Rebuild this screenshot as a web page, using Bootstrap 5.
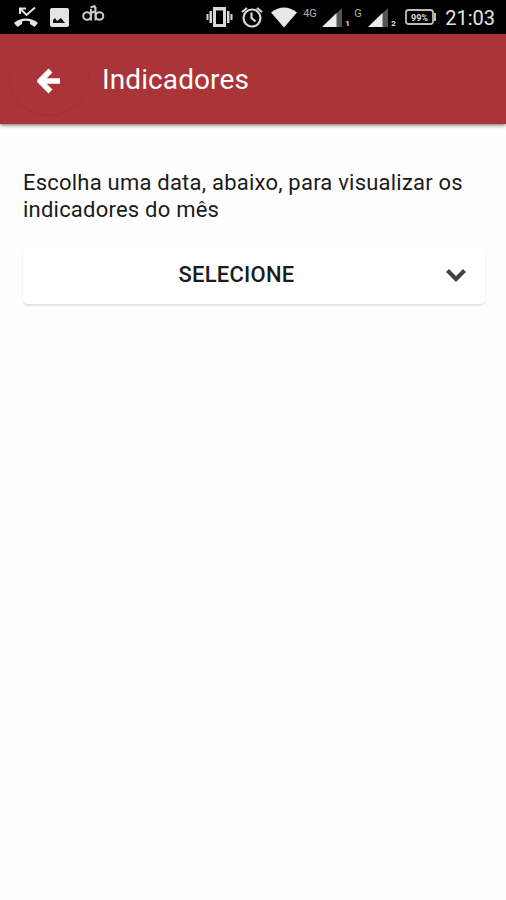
<!DOCTYPE html>
<html lang="pt-BR">
<head>
<meta charset="utf-8">
<meta name="viewport" content="width=device-width, initial-scale=1">
<title>Indicadores</title>
<link href="https://cdn.jsdelivr.net/npm/bootstrap@5.3.0/dist/css/bootstrap.min.css" rel="stylesheet">
<style>
body { font-family: Roboto, sans-serif; background: #fefefe; color: #1b1b1b; min-height: 900px; }
svg { display: block; flex: none; }
.status-bar { height: 34px; background: #000; color: #e4e4e4; padding-right: 11px; }
.net { font-size: 11px; line-height: 12px; color: #b0b0b0; width: 15px; margin: 8px 4px 0 6px; }
.net-g { width: 9px; margin: 8px 5px 0 4px; }
.sim { font-size: 8px; line-height: 8px; font-weight: 700; width: 5px; margin: 20px 0 0 2px; }
.clock { font-size: 20px; line-height: 34px; margin: 1px 0 0 8px; white-space: nowrap; }
.app-bar { height: 90px; background: #aa3438; color: #fff; box-shadow: 0 1px 4px rgba(0,0,0,.6); padding-left: 9px; }
.back { width: 80px; height: 80px; padding: 11px 2px 0 0; border: 0; border-radius: 50%; background: none; box-shadow: 0 1px 1px rgba(110,20,25,.16); margin-top: -8px; }
.page-title { font-size: 28px; font-weight: 400; line-height: 90px; margin: 2px 0 0 13px; letter-spacing: .1px; }
.page-main { padding: 46px 21px 0 23px; }
.intro { font-size: 22px; line-height: 26.5px; margin: 0 0 23px; white-space: nowrap; letter-spacing: .22px; }
.month-select { height: 58px; border: 0; border-radius: 5px; background: #fff; box-shadow: 0 2px 2px rgba(0,0,0,.11); color: #1c1c1c; font-size: 22px; font-weight: 500; letter-spacing: .25px; padding: 0 18px 0 5px; }
.month-select span { margin-top: -2px; }
</style>
</head>
<body>
<div class="status-bar d-flex align-items-start overflow-hidden">
  <svg width="39" height="34" viewBox="0 0 39 34" fill="none" stroke="#e4e4e4"><path d="M20 14V8.500h6M20.500 9l6 6L35 7.500" stroke-width="2"/><path d="M14 23C20 17 32 17 38 23L34.500 27L30 24V21.500C27 20.500 25 20.500 22 21.500V24L17.500 27Z" fill="#e4e4e4" stroke="none"/></svg>
  <svg width="43" height="34" viewBox="39 0 43 34"><rect x="50" y="8" width="19" height="19" rx="2" fill="#e4e4e4"/><path d="M53 23v-3l2-2 2 3 4-3 4 5z" fill="#111"/></svg>
  <svg width="24" height="34" viewBox="82 0 24 34" fill="none" stroke="#c9c9c9" stroke-width="2"><circle cx="87" cy="16" r="3.800"/><circle cx="99.500" cy="16" r="3.800"/><path d="M91 9v11.500M95.500 20.500V7M90.500 7.500l4-1.500 1 3M91 13l4.500-2"/></svg>
  <svg class="ms-auto" width="28" height="34" viewBox="206 0 28 34"><path d="M213 7h13v20h-13zM209.500 11h2.500v12h-2.500zM227 11h2.500v12H227zM206.500 14h2v6h-2zM230.500 14h2v6h-2z" fill="#d8d8d8"/><path d="M216 10.500h7v13.500h-7z" fill="#000"/></svg>
  <svg width="37" height="34" viewBox="234 0 37 34" fill="none" stroke="#d8d8d8" stroke-width="2.200"><circle cx="252" cy="18" r="8.500"/><path d="M251.500 12.500V18l4 3.500M242 12l5-4M257 8l5 4"/></svg>
  <svg width="26" height="34" viewBox="271 0 26 34"><path d="M271 12.500Q284 2.500 297 12.500L284 27.500Z" fill="#e8e8e8"/></svg>
  <span class="net">4G</span>
  <svg width="21" height="34" viewBox="0 0 21 34"><path d="M0 27L20 8V27Z" fill="#555"/><path d="M0 27L14.500 13V27Z" fill="#ececec"/></svg>
  <span class="sim">1</span>
  <span class="net net-g">G</span>
  <svg width="21" height="34" viewBox="0 0 21 34"><path d="M0 27L20 8V27Z" fill="#555"/><path d="M0 27L14.500 13V27Z" fill="#ececec"/></svg>
  <span class="sim">2</span>
  <svg width="41" height="34" viewBox="396 0 41 34" fill="none" stroke="#bcbcbc"><rect x="406" y="10" width="27" height="14" rx="2.500" stroke-width="1.800"/><path d="M435 13v8" stroke-width="2"/><text x="411" y="20.500" font-size="9" font-weight="700" fill="#ddd" stroke="none" textLength="17" lengthAdjust="spacingAndGlyphs">99%</text></svg>
  <time class="clock">21:03</time>
</div>
<header class="app-bar d-flex align-items-center">
  <button type="button" class="back d-flex align-items-center justify-content-center" aria-label="Voltar">
    <svg width="26" height="26" viewBox="0 0 26 26" fill="none" stroke="#fff" stroke-width="5.600" stroke-linejoin="round"><path d="M15.500 2.500L5 13l10.500 10.500M6 13h19"/></svg>
  </button>
  <h1 class="page-title">Indicadores</h1>
</header>
<main class="page-main">
  <p class="intro">Escolha uma data, abaixo, para visualizar os<br>indicadores do mês</p>
  <button type="button" class="month-select w-100 d-flex align-items-center">
    <span class="flex-grow-1 text-center">SELECIONE</span>
    <svg width="22" height="16" viewBox="0 0 22 16" fill="none" stroke="#404040" stroke-width="4.200"><path d="M2.500 3.500l8.500 8.500 8.500-8.500"/></svg>
  </button>
</main>
<script src="https://cdn.jsdelivr.net/npm/bootstrap@5.3.0/dist/js/bootstrap.bundle.min.js"></script>
</body>
</html>
